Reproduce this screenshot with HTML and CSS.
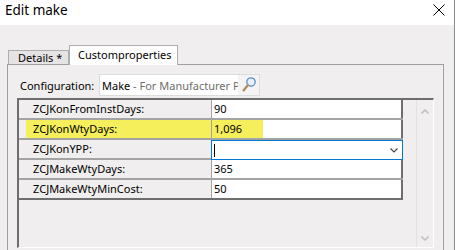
FILE: index.html
```html
<!DOCTYPE html>
<html lang="en">
<head>
    <meta charset="UTF-8">
    <title>Edit make</title>
    <link rel="stylesheet" href="styles.css">
</head>
<body>
<div class="window">
    <div class="titlebar">
        <span class="title">Edit make</span>
        <svg class="close" width="12" height="12" viewBox="0 0 12 12">
            <path d="M0.5 0.5 L11.5 11.5 M11.5 0.5 L0.5 11.5" stroke="#000" stroke-width="1" fill="none"/>
        </svg>
    </div>
    <div class="content">
        <div class="tabs">
            <div class="tab">Details *</div>
            <div class="tab active">Customproperties</div>
        </div>
        <div class="panel">
            <div class="config-row">
                <span class="config-label">Configuration:</span>
                <div class="config-box">
                    <span class="config-text">Make<span class="muted"> - For Manufacturer Prop</span></span>
                    <span class="lookup">
                        <svg width="16" height="18" viewBox="0 0 16 18">
                            <circle cx="10" cy="6" r="4.2" fill="#e4f0fb" stroke="#5b8fc7" stroke-width="1.3"/>
                            <path d="M7 9 L2.5 14.5" stroke="#b08a5a" stroke-width="2.2" stroke-linecap="round"/>
                        </svg>
                    </span>
                </div>
            </div>
            <div class="grid">
                <div class="rows">
                    <div class="row">
                        <div class="name">ZCJKonFromInstDays:</div>
                        <div class="value">90</div>
                    </div>
                    <div class="row">
                        <div class="name"><span class="mark mark-name">ZCJKonWtyDays:</span></div>
                        <div class="value"><span class="mark mark-value">1,096</span></div>
                    </div>
                    <div class="row">
                        <div class="name">ZCJKonYPP:</div>
                        <div class="value focused">
                            <span class="caret"></span>
                            <svg class="drop" width="8" height="5" viewBox="0 0 8 5">
                                <path d="M0.5 0.5 L4 4 L7.5 0.5" stroke="#444" stroke-width="1.1" fill="none"/>
                            </svg>
                        </div>
                    </div>
                    <div class="row">
                        <div class="name">ZCJMakeWtyDays:</div>
                        <div class="value">365</div>
                    </div>
                    <div class="row last">
                        <div class="name">ZCJMakeWtyMinCost:</div>
                        <div class="value">50</div>
                    </div>
                </div>
                <div class="scroll">
                    <svg width="8" height="5" viewBox="0 0 8 5">
                        <path d="M0.5 4.5 L4 1 L7.5 4.5" stroke="#c2c2c2" stroke-width="1.6" fill="none"/>
                    </svg>
                    <svg width="8" height="5" viewBox="0 0 8 5">
                        <path d="M0.5 0.5 L4 4 L7.5 0.5" stroke="#c2c2c2" stroke-width="1.6" fill="none"/>
                    </svg>
                </div>
            </div>
        </div>
    </div>
</div>
</body>
</html>
```

FILE: styles.css
```css
body {
    margin: 0;
    font-family: "Noto Sans", "Open Sans", sans-serif;
    font-size: 11px;
    color: #000;
    background-color: #f0eeee;
    overflow: hidden;
}
.window {
    width: 454px;
    height: 250px;
    border-right: 1px solid #8c8c8c;
    overflow: hidden;
}
.titlebar {
    height: 25px;
    background-color: #fff;
    display: flex;
    justify-content: space-between;
    align-items: flex-start;
}
.title {
    font-size: 13.5px;
    line-height: 18px;
    padding: 1px 0 0 5px;
}
.close {
    margin: 4px 9px 0 0;
}
.content {
    padding: 20px 0 0 7px;
}
.tabs {
    display: flex;
    align-items: flex-end;
    height: 19px;
    padding-left: 1px;
}
.tab {
    box-sizing: border-box;
    height: 14px;
    width: 61px;
    border: 1px solid #adadad;
    border-bottom: none;
    background-color: #e5e3e3;
    line-height: 13px;
    padding-left: 9px;
}
.tab.active {
    height: 20px;
    width: 109px;
    margin-bottom: -1px;
    background-color: #fff;
    line-height: 17px;
    padding-left: 8px;
    position: relative;
}
.panel {
    box-sizing: border-box;
    width: 437px;
    height: 200px;
    border: 1px solid #a0a0a0;
    border-bottom: none;
}
.config-row {
    display: flex;
    align-items: center;
    margin-top: 9px;
    height: 22px;
}
.config-label {
    width: 79px;
    padding-left: 12px;
    white-space: nowrap;
}
.config-box {
    box-sizing: border-box;
    width: 161px;
    height: 22px;
    border: 1px solid #dcdcdc;
    background-color: #fff;
    display: flex;
    align-items: center;
    overflow: hidden;
}
.config-text {
    flex: 1;
    white-space: nowrap;
    overflow: hidden;
    padding-left: 2px;
}
.muted {
    color: #6d6d6d;
}
.lookup {
    width: 21px;
    height: 20px;
    background-color: #f4f4f4;
    display: flex;
    align-items: center;
    justify-content: center;
}
.grid {
    box-sizing: border-box;
    margin: 2px 0 0 9px;
    width: 417px;
    height: 150px;
    border-top: 2px solid #6e6e6e;
    border-left: 2px solid #6e6e6e;
    border-right: 1px solid #fff;
    border-bottom: 1px solid #fff;
    display: flex;
}
.rows {
    width: 384px;
}
.row {
    display: flex;
    height: 20px;
    box-sizing: border-box;
    border-bottom: 2px solid #a3a3a3;
}
.row.last {
    border-bottom-color: #6e6e6e;
}
.name {
    width: 192px;
    line-height: 18px;
    padding-left: 14px;
    box-sizing: border-box;
}
.value {
    box-sizing: border-box;
    width: 192px;
    background-color: #fff;
    border-left: 1px solid #a3a3a3;
    border-right: 2px solid #6e6e6e;
    line-height: 18px;
    padding-left: 2px;
}
.mark {
    display: block;
    background-color: #f5ef5b;
}
.mark-name {
    margin-left: -7px;
    padding-left: 7px;
}
.mark-value {
    margin-left: -2px;
    padding-left: 2px;
    width: 49px;
}
.value.focused {
    border: 1px solid #0078d7;
    height: 20px;
    margin-bottom: -2px;
    display: flex;
    align-items: center;
    justify-content: space-between;
    padding: 0 4px 0 2px;
    position: relative;
}
.caret {
    width: 1px;
    height: 13px;
    background-color: #000;
}
.scroll {
    box-sizing: border-box;
    margin-left: 13px;
    width: 17px;
    border-left: 1px solid #e2e2e2;
    display: flex;
    flex-direction: column;
    align-items: center;
    justify-content: space-between;
    padding: 9px 0 6px 0;
}
```
